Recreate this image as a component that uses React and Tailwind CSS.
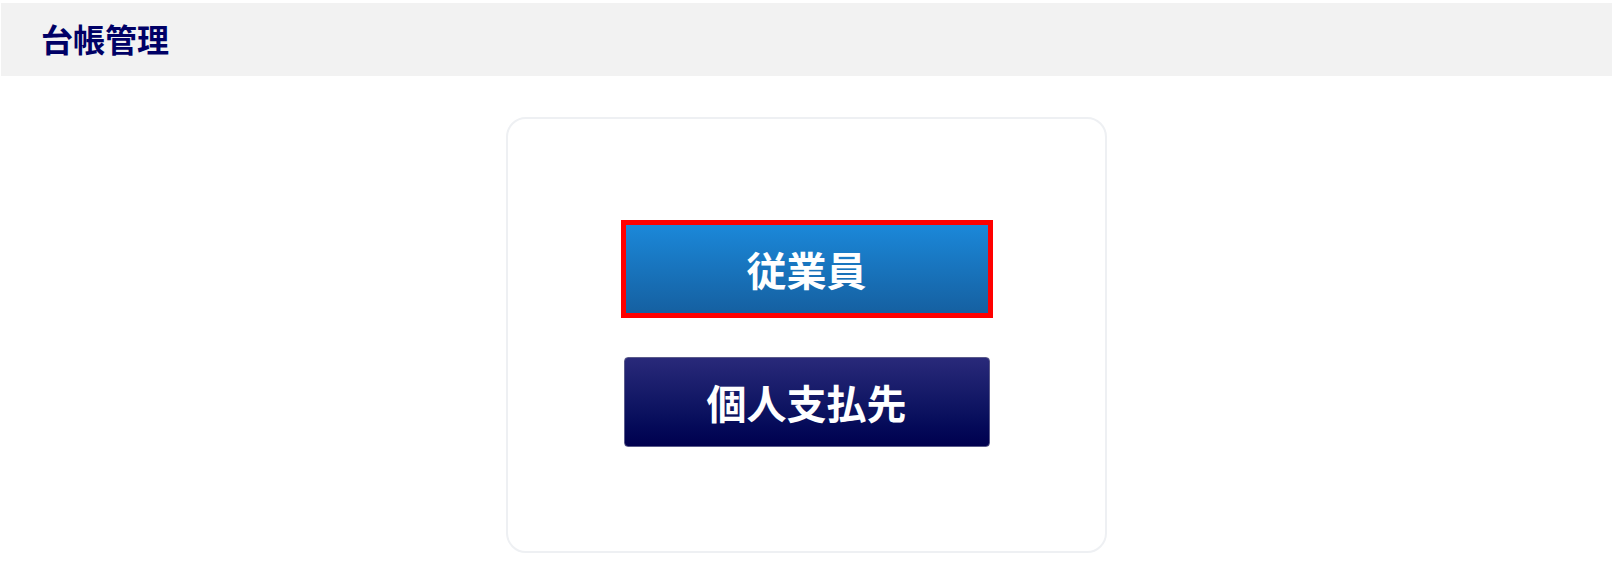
import React from "react";

const jp = { fontFamily: '"Noto Sans CJK JP", "Noto Sans", sans-serif' };

export default function App() {
  return (
    <div className="min-h-[568px] bg-white pt-[3px]" style={jp}>
      {/* Header */}
      <div className="mx-[1px] h-[73px] bg-[#f2f2f2] flex items-center pl-[40px]">
        <h1 className="text-[32px] font-bold text-[#000066] leading-none -mt-[4px]">台帳管理</h1>
      </div>

      {/* Card */}
      <div className="mt-[41px] mx-auto w-[601px] h-[436px] rounded-[20px] border-2 border-[#eef0f3] bg-white flex flex-col items-center pt-[101px]">
        <button className="w-[372px] h-[98px] border-[5px] border-[#ff0000] bg-gradient-to-b from-[#1b88d9] to-[#1560a1] text-white text-[40px] font-bold leading-none flex items-center justify-center">
          従業員
        </button>
        <button className="mt-[39px] w-[366px] h-[90px] rounded-[4px] border border-[#5a5a8a] bg-gradient-to-b from-[#29297a] to-[#00004f] text-white text-[40px] font-bold leading-none flex items-center justify-center">
          個人支払先
        </button>
      </div>
    </div>
  );
}
